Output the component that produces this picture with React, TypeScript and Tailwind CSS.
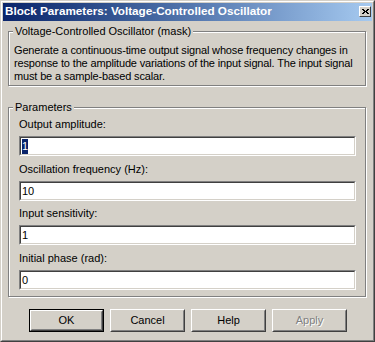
import React from "react";

function CloseGlyph() {
  const rows = [
    "XX...XX",
    ".XX.XX.",
    "..XXX..",
    ".XX.XX.",
    "XX...XX",
  ];
  const rects: React.ReactNode[] = [];
  rows.forEach((r, y) =>
    r.split("").forEach((c, x) => {
      if (c === "X") rects.push(<rect key={`${x}-${y}`} x={x} y={y} width={1} height={1} fill="#000" />);
    })
  );
  return (
    <svg width="7" height="5" viewBox="0 0 7 5" shapeRendering="crispEdges">
      {rects}
    </svg>
  );
}

function Field({ value, selected }: { value: string; selected?: boolean }) {
  return (
    <div className="ml-0 w-[337px] h-[20px] border border-t-[#808080] border-l-[#808080] border-r-white border-b-white">
      <div className="h-full border border-t-[#404040] border-l-[#404040] border-r-[#d4d0c8] border-b-[#d4d0c8] bg-white flex items-center pl-[1px] leading-[16px]">
        {selected ? (
          <span className="bg-[#0a246a] text-white leading-[15px] inline-block">{value}</span>
        ) : (
          <span>{value}</span>
        )}
      </div>
    </div>
  );
}

function Button({ label, def, disabled }: { label: string; def?: boolean; disabled?: boolean }) {
  const inner = (
    <div className="h-full border border-t-white border-l-white border-r-[#404040] border-b-[#404040]">
      <div className="h-full border border-t-[#d4d0c8] border-l-[#d4d0c8] border-r-[#808080] border-b-[#808080] flex items-center justify-center pb-[1px]">
        <span className={disabled ? "text-[#808080] [text-shadow:1px_1px_0_#fff]" : ""}>{label}</span>
      </div>
    </div>
  );
  if (def) {
    return <div className="w-[75px] h-[23px] border border-black">{inner}</div>;
  }
  return <div className="w-[75px] h-[23px]">{inner}</div>;
}

export default function App() {
  return (
    <div className="w-[375px] h-[342px] bg-[#d4d0c8] font-['Liberation_Sans',Arial,sans-serif] text-[11px] leading-[13px] text-black border border-t-[#d4d0c8] border-l-[#d4d0c8] border-r-[#404040] border-b-[#404040] overflow-hidden">
      <div className="h-full border border-t-white border-l-white border-r-[#808080] border-b-[#808080] p-[1px] flex flex-col">
        {/* Title bar */}
        <div className="h-[18px] shrink-0 bg-gradient-to-r from-[#0a246a] to-[#a6caf0] flex items-center pl-[2px] pr-[1px]">
          <span className="text-white font-bold text-[11.7px] leading-[18px] pb-[2px] whitespace-nowrap">
            Block Parameters: Voltage-Controlled Oscillator
          </span>
          <div className="ml-auto w-[12px] h-[11px] mb-[2px] bg-[#d4d0c8] border border-t-white border-l-white border-r-[#404040] border-b-[#404040] flex items-center justify-center">
            <CloseGlyph />
          </div>
        </div>

        {/* Group 1 */}
        <div className="relative ml-[5px] mt-[10px] w-[358px] h-[55px] shrink-0 border border-[#808080] shadow-[inset_1px_1px_0_#fff,1px_1px_0_#fff] pt-[12px] pl-[5px] tracking-[-0.15px]">
          <div className="absolute top-[-7px] left-[4px] px-[2px] bg-[#d4d0c8] whitespace-nowrap tracking-normal">
            Voltage-Controlled Oscillator (mask)
          </div>
          <div className="whitespace-nowrap">Generate a continuous-time output signal whose frequency changes in</div>
          <div className="whitespace-nowrap">response to the amplitude variations of the input signal. The input signal</div>
          <div className="whitespace-nowrap">must be a sample-based scalar.</div>
        </div>

        {/* Group 2 */}
        <div className="relative ml-[5px] mt-[21px] w-[358px] h-[190px] shrink-0 border border-[#808080] shadow-[inset_1px_1px_0_#fff,1px_1px_0_#fff] pt-[10px] pl-[10px] flex flex-col">
          <div className="absolute top-[-7px] left-[4px] px-[2px] bg-[#d4d0c8] whitespace-nowrap">Parameters</div>
          <div className="h-[13px]">Output amplitude:</div>
          <div className="mt-[5px]">
            <Field value="1" selected />
          </div>
          <div className="h-[13px] mt-[7px]">Oscillation frequency (Hz):</div>
          <div className="mt-[5px]">
            <Field value="10" />
          </div>
          <div className="h-[13px] mt-[6px]">Input sensitivity:</div>
          <div className="mt-[5px]">
            <Field value="1" />
          </div>
          <div className="h-[13px] mt-[7px]">Initial phase (rad):</div>
          <div className="mt-[5px]">
            <Field value="0" />
          </div>
        </div>

        {/* Buttons */}
        <div className="mt-[12px] pl-[26px] flex gap-[6px]">
          <Button label="OK" def />
          <Button label="Cancel" />
          <Button label="Help" />
          <Button label="Apply" disabled />
        </div>
      </div>
    </div>
  );
}
